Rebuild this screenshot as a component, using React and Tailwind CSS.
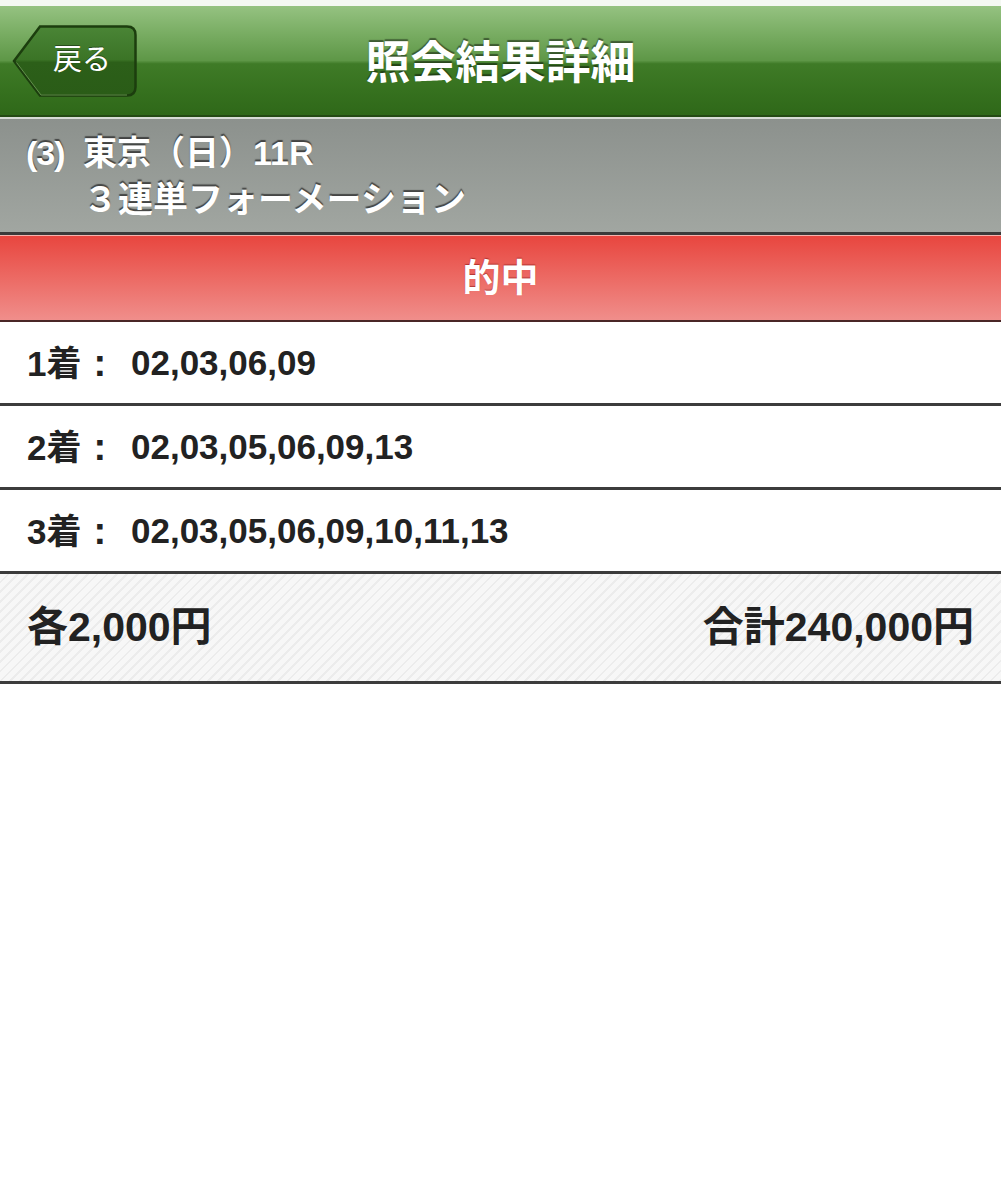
const font = { fontFamily: '"Liberation Sans", "Noto Sans CJK JP", sans-serif' };

const BackButton = () => (
  <button className="relative w-[126px] h-[74px] text-white text-[29px] font-normal">
    <svg className="absolute inset-0" width="126" height="74" viewBox="0 0 126 74">
      <defs>
        <linearGradient id="bk" x1="0" y1="0" x2="0" y2="1">
          <stop offset="0" stopColor="#4a8536" />
          <stop offset="0.48" stopColor="#3b7426" />
          <stop offset="0.52" stopColor="#2c5f19" />
          <stop offset="1" stopColor="#2a5c17" />
        </linearGradient>
      </defs>
      <path d="M2 37 L28 2.5 H115 Q123.5 2.5 123.5 11 V63 Q123.5 71.5 115 71.5 H28 Z" fill="url(#bk)" stroke="#1c3e0e" strokeWidth="2.5" />
      <path d="M4.5 38.5 L29 71 H115" fill="none" stroke="#7fb065" strokeWidth="1" opacity="0.7" />
    </svg>
    <span className="relative block pl-[14px] [text-shadow:0_-1px_0_rgba(0,0,0,0.4)]">戻る</span>
  </button>
);

const rows = [
  ["1着", "02,03,06,09"],
  ["2着", "02,03,05,06,09,13"],
  ["3着", "02,03,05,06,09,10,11,13"],
];

export default function App() {
  return (
    <div className="w-[1001px] min-h-[1200px] bg-white" style={font}>
      <div className="h-[6px] bg-[#f4f8f2]" />
      {/* header */}
      <div className="relative h-[111px] flex items-center px-[12px] border-b-2 border-[#244a14] bg-[linear-gradient(to_bottom,#95c281_0%,#79ad63_25%,#5e9747_50%,#3f7b27_53%,#35701e_80%,#2f6819_100%)]">
        <BackButton />
        <h1 className="absolute left-0 right-0 top-[30px] text-center text-[45px] leading-[56px] font-bold text-white pointer-events-none [text-shadow:0_-2px_1px_rgba(0,0,0,0.45)]">
          照会結果詳細
        </h1>
      </div>
      {/* race info */}
      <div className="h-[115px] border-t-2 border-[#d7dcd6] bg-[linear-gradient(to_bottom,#8c918d,#a1a6a1)] flex pl-[26px] pt-[11px] text-white font-bold [text-shadow:0_-2px_1px_rgba(40,40,40,0.75)]">
        <div className="text-[34px] leading-[46px] w-[57px] tracking-[-1px]">(3)</div>
        <div>
          <div className="text-[34px] leading-[46px]">東京（日）11R</div>
          <div className="text-[35px] leading-[46px] mt-[1px]">３連単フォーメーション</div>
        </div>
      </div>
      {/* hit banner */}
      <div className="h-[90px] border-t-[3px] border-[#3a3a3a] border-b-2 border-b-[#4a2626]">
        <div className="h-full border-t border-[#f6b3ae] bg-[linear-gradient(to_bottom,#e8463f,#ec6a64_50%,#f08e8b)] flex items-center justify-center">
          <span className="text-white font-bold text-[38px] [text-shadow:0_-1px_1px_rgba(120,0,0,0.5)]">的中</span>
        </div>
      </div>
      {/* rows */}
      {rows.map(([label, nums]) => (
        <div key={label} className="h-[84px] border-b-[3px] border-[#3c3c3c] flex items-center pl-[27px] pt-[2px] text-[#222] font-bold text-[35px]">
          <span className="w-[104px] whitespace-nowrap">
            {label}
            <span className="ml-[12px] text-[38px]">:</span>
          </span>
          <span>{nums}</span>
        </div>
      ))}
      {/* total */}
      <div className="h-[110px] border-b-[3px] border-[#3c3c3c] bg-[repeating-linear-gradient(135deg,#f7f7f7_0px,#f7f7f7_5px,#ececec_5px,#ececec_7px)] flex items-center justify-between px-[27px] text-[#222] font-bold text-[41px]">
        <span>各2,000円</span>
        <span>合計240,000円</span>
      </div>
    </div>
  );
}
